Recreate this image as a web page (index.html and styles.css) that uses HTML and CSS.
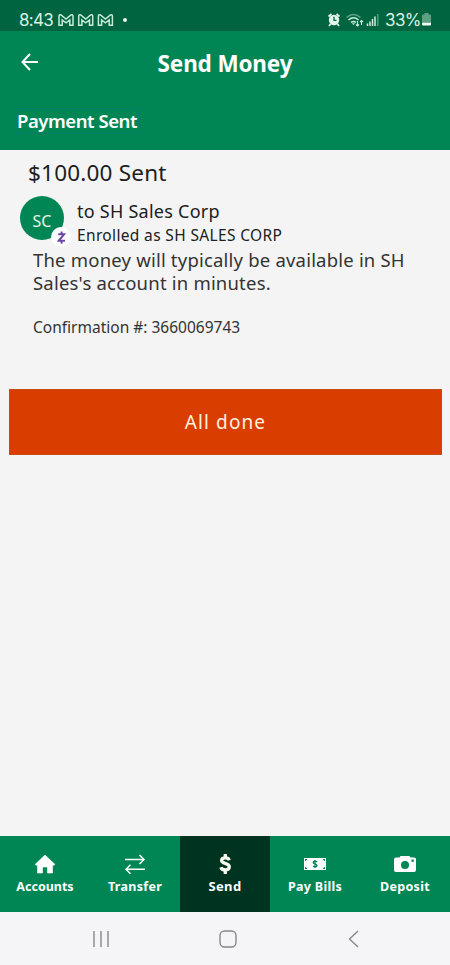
FILE: index.html
```html
<!DOCTYPE html>
<html lang="en">
<head>
<meta charset="utf-8">
<title>Send Money</title>
<link rel="stylesheet" href="styles.css">
</head>
<body>
<div class="status">
  <span class="time">8:43</span>
  <svg class="mails" width="56" height="14" viewBox="0 0 56 14"><defs><path id="m" d="M1 12.200V3.200Q1 1 3 2L8 6L13 2Q15 1 15 3.200V12.200H11.800V7L8 9.800L4.200 7V12.200H1Z"/></defs><use href="#m"/><use href="#m" x="19.700"/><use href="#m" x="39.400"/></svg>
  <span class="dot"></span>
  <svg class="sys" width="54" height="16" viewBox="0 0 54 16">
    <circle cx="7" cy="8" r="5.200" fill="#e4f6ea"/><path d="M1.500 4.500L4.500 2M12.500 4.500L9.500 2M3.500 12L2 14M10.500 12L12 14" stroke="#e4f6ea" stroke-width="1.700"/><path d="M7 4.800V8.300H9.500" fill="none" stroke="#006440" stroke-width="1.300"/>
    <g fill="none" stroke="#d0eddb" stroke-width="1.500"><path d="M19.500 5.500Q26.500-.5 33.500 5.500" opacity=".45"/><path d="M21.500 8Q26.500 3.500 31.500 8M24 10.500Q26.500 8.500 29 10.500"/><path d="M30.500 9V14M29 12.500L30.500 14L32 12.500M34.500 13V8.500M33 10L34.500 8.500L36 10" stroke-width="1.100"/></g>
    <path d="M26.500 13L24.800 11.200H28.200Z" fill="#d0eddb"/>
    <path d="M40.500 14V11.500M43 14V9.500M45.500 14V7M48 14V4.500" stroke="#d0eddb" stroke-width="1.500"/><path d="M50.800 14V2" stroke="#569b7d" stroke-width="1.500"/>
  </svg>
  <span class="percent">33%</span>
  <svg class="battery" width="9" height="13" viewBox="0 0 9 13"><path d="M2.500 0H6.500V1.500H8Q9 1.500 9 2.500V9H0V2.500Q0 1.500 1 1.500H2.500Z" fill="#5d9f82"/><path d="M0 9.500H9V11.500Q9 12.500 8 12.500H1Q0 12.500 0 11.500Z" fill="#f1fff6"/></svg>
</div>
<header class="header">
  <svg class="back" width="18" height="18" viewBox="0 0 18 18"><path d="M17 9H1.500M9 1L1.500 9L9 17"/></svg>
  <h1>Send Money</h1>
  <h2><span class="subtitle">Payment Sent</span></h2>
</header>
<main>
  <p class="amount">$100.00 Sent</p>
  <div class="recipient">
    <div class="avatar">SC<span class="badge"><svg width="9" height="13" viewBox="0 0 9 13"><path d="M1.200 3.200H7.200L1.700 9.800H8M4.600.4V3M4.600 10V12.800"/></svg></span></div>
    <div class="who">
      <p class="name">to SH Sales Corp</p>
      <p class="enrolled">Enrolled as SH SALES CORP</p>
    </div>
  </div>
  <p class="message">The money will typically be available in SH<br>Sales's account in minutes.</p>
  <p class="confirm">Confirmation #: 3660069743</p>
  <button class="done">All done</button>
</main>
<nav class="tabs">
  <div class="tab"><svg width="24" height="22" viewBox="0 0 24 22"><path d="M12 2L22 11.500L20.500 12.300H19.500V20H14.500V14H9.500V20H4.500V12.300H3.500L2 11.500Z" fill="#fff" stroke="#fff" stroke-width=".6" stroke-linejoin="round"/></svg><span>Accounts</span></div>
  <div class="tab"><svg width="24" height="22" viewBox="0 0 24 22"><path d="M2 6.500H21M16.500 2L21 6.500L16.500 11M22 16.300H3M7.500 11.800L3 16.300L7.500 20.800" fill="none" stroke="#fff" stroke-width="1.500"/></svg><span class="spaced">Transfer</span></div>
  <div class="tab active"><svg width="24" height="22" viewBox="0 0 24 22"><path d="M16.300 7.200C15.800 5.600 14.400 4.900 12.300 4.900C10 4.900 8.600 5.800 8.600 7.500C8.600 11.200 16.300 9.500 16.300 13.800C16.300 15.700 14.700 16.900 12.300 16.900C9.800 16.900 8.400 16 7.900 14.200M12.300 1V5M12.300 17V21" fill="none" stroke="#f6faed" stroke-width="3.300"/></svg><span class="wide">Send</span></div>
  <div class="tab"><svg width="24" height="22" viewBox="0 0 24 22"><path d="M1 5H23V17H1Z" fill="#fff"/><path d="M2 6H4.500L2 8.500ZM22 6H19.500L22 8.500ZM2 16H4.500L2 13.500ZM22 16H19.500L22 13.500Z" fill="#008655"/><path d="M14 9C13 7.700 10.200 8 10.200 9.400C10.200 11.200 14 10.500 14 12.400C14 14 11 14.200 10 12.900M12 7V15" fill="none" stroke="#008655" stroke-width="1.300"/></svg><span class="spaced">Pay Bills</span></div>
  <div class="tab"><svg width="24" height="22" viewBox="0 0 24 22"><path d="M3 4.500H6.500L7.500 3H16.500L17.500 4.500H21Q23 4.500 23 6.500V17Q23 19 21 19H3Q1 19 1 17V6.500Q1 4.500 3 4.500Z" fill="#fff"/><circle cx="12" cy="12" r="4" fill="#008655"/><rect x="18.500" y="6.500" width="2.300" height="2.300" fill="#008655"/></svg><span class="spaced">Deposit</span></div>
</nav>
<footer class="system">
  <svg width="18" height="18" viewBox="0 0 18 18"><path d="M2 1V17M9 1V17M16 1V17"/></svg>
  <svg width="18" height="18" viewBox="0 0 18 18"><rect x="1" y="1" width="16" height="16" rx="4.500"/></svg>
  <svg width="18" height="18" viewBox="0 0 18 18"><path d="M13 1L4.500 9L13 17"/></svg>
</footer>
</body>
</html>
```
FILE: styles.css
```css
* { box-sizing: border-box; }
body { margin: 0; width: 450px; height: 965px; display: flex; flex-direction: column; background: #f4f4f4; font-family: "Noto Sans", sans-serif; color: #202020; overflow: hidden; }
p, h1, h2 { margin: 0; font-weight: 400; white-space: nowrap; }
.status { height: 31px; flex: none; display: flex; align-items: center; padding: 8px 19px 0; background: #006440; color: #d8f2e2; font-family: Inter, sans-serif; }
.time { width: 39px; font-size: 17px; letter-spacing: -0.700px; }
.mails { fill: none; stroke: #c5ebd5; stroke-width: 1.500; }
.dot { width: 4px; height: 4px; margin-left: 9px; border-radius: 50%; background: #e4f6ea; }
.sys { margin-left: 200px; }
.percent { width: 36px; margin-left: 4px; font-size: 17px; letter-spacing: -0.600px; }
.battery { margin-left: 1px; flex: none; }
.header { height: 119px; flex: none; display: grid; grid-template-columns: 68px 1fr 68px; grid-template-rows: 64px 1fr; align-items: center; background: #008655; color: #fff; }
.back { margin-left: 21px; margin-bottom: 2px; fill: none; stroke: #fff; stroke-width: 2; }
.header h1 { text-align: center; font-size: 22.500px; font-weight: 700; letter-spacing: -0.150px; }
.header h2 { grid-column: 1 / 4; padding: 0 0 3px 17px; font-size: 18.500px; font-weight: 600; line-height: 24px; letter-spacing: -0.450px; }
.subtitle { display: block; width: 121px; outline: 1px solid #087d69; }
main { flex: 1; padding: 5px 9px; }
.amount { padding-left: 19px; line-height: 36px; font-size: 22.500px; letter-spacing: 0.200px; }
.recipient { height: 53px; display: flex; padding: 5px 0 0 11px; gap: 13px; }
.avatar { position: relative; width: 44px; height: 44px; flex: none; border-radius: 50%; background: #008655; color: #e7f7ed; font-size: 16px; line-height: 50px; text-align: center; }
.badge { position: absolute; left: 31px; top: 31px; width: 20px; height: 20px; border-radius: 50%; background: #fff; display: flex; align-items: center; justify-content: center; }
.badge path { fill: none; stroke: #6b45ac; stroke-width: 1.900; }
.name { line-height: 26px; font-size: 18px; margin-top: 2px; letter-spacing: 0.250px; }
.enrolled { line-height: 22px; font-size: 15.500px; letter-spacing: 0.350px; }
.message { margin: 4px 0 0 24px; line-height: 23px; font-size: 18.500px; letter-spacing: 0.200px; color: #333; }
.confirm { margin: 21px 0 0 24px; line-height: 24px; font-size: 15.500px; color: #333; }
.done { width: 433px; height: 66px; display: block; margin-top: 50px; border: 1px solid #c64a17; border-radius: 0; background: #d93d00; color: #fff1df; font: 19px "Noto Sans", sans-serif; letter-spacing: 1.100px; }
.tabs { height: 76px; flex: none; display: grid; grid-template-columns: repeat(5, 1fr); background: #008655; color: #fff; font-size: 12.500px; font-weight: 700; white-space: nowrap; }
.tab { display: flex; flex-direction: column; align-items: center; padding-top: 17px; line-height: 23px; }
.spaced { letter-spacing: 0.300px; }
.wide { font-size: 13px; letter-spacing: 0.400px; }
.active { background: #003320; }
.tab svg { flex: none; }
.system { height: 53px; flex: none; display: flex; justify-content: space-between; align-items: center; padding: 0 87px 0 92px; background: #f5f5f8; }
.system svg { fill: none; stroke: #888; stroke-width: 1.400; }
```
